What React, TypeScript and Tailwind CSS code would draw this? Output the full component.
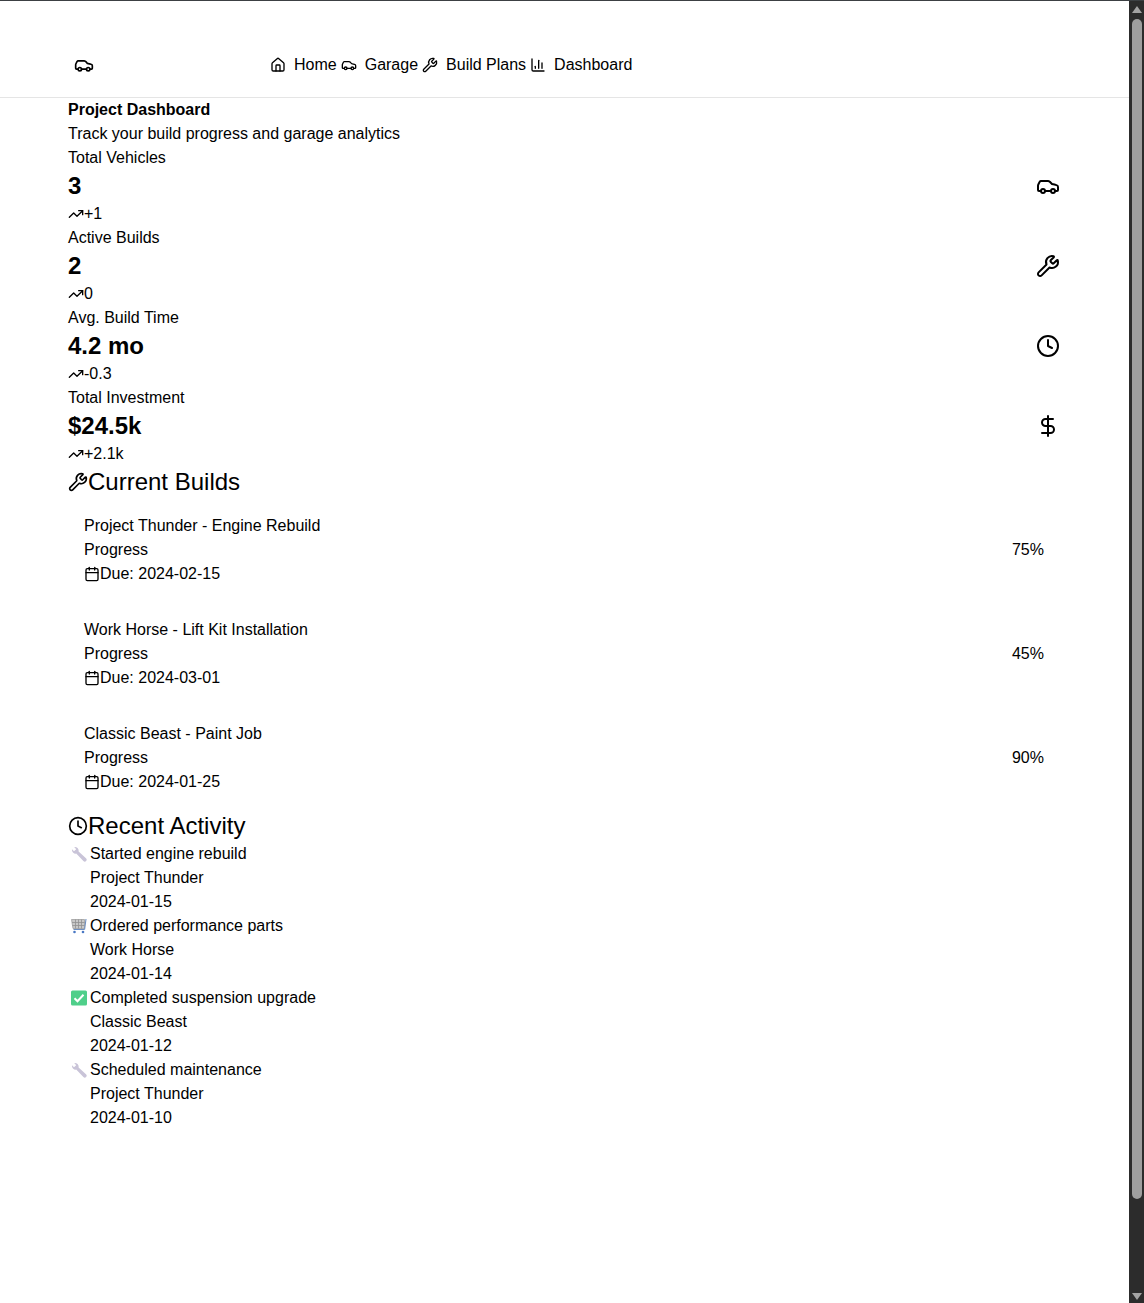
import React from 'react';
import { Home, Car, Wrench, ChartColumn, TrendingUp, Clock, DollarSign, Calendar } from "lucide-react";

const stats = [
  { label: 'Total Vehicles', value: '3', change: '+1', icon: Car },
  { label: 'Active Builds', value: '2', change: '0', icon: Wrench },
  { label: 'Avg. Build Time', value: '4.2 mo', change: '-0.3', icon: Clock },
  { label: 'Total Investment', value: '$24.5k', change: '+2.1k', icon: DollarSign },
];

const builds = [
  { name: 'Project Thunder - Engine Rebuild', progress: 75, due: '2024-02-15' },
  { name: 'Work Horse - Lift Kit Installation', progress: 45, due: '2024-03-01' },
  { name: 'Classic Beast - Paint Job', progress: 90, due: '2024-01-25' },
];

const activity = [
  { kind: 'wrench', action: 'Started engine rebuild', project: 'Project Thunder', date: '2024-01-15' },
  { kind: 'cart', action: 'Ordered performance parts', project: 'Work Horse', date: '2024-01-14' },
  { kind: 'check', action: 'Completed suspension upgrade', project: 'Classic Beast', date: '2024-01-12' },
  { kind: 'wrench', action: 'Scheduled maintenance', project: 'Project Thunder', date: '2024-01-10' },
];

const navLinks = [
  { label: 'Home', icon: Home },
  { label: 'Garage', icon: Car },
  { label: 'Build Plans', icon: Wrench },
  { label: 'Dashboard', icon: ChartColumn },
];

function ActivityGlyph({ kind }: { kind: string }) {
  if (kind === 'check') {
    return (
      <svg viewBox="0 0 16 16" className="w-4 h-4">
        <rect x="0" y="0.5" width="16" height="15" rx="1.5" fill="#4fcf8a" />
        <path d="M3.5 8.2l3 3 6-6.4" fill="none" stroke="#ffffff" strokeWidth="2" />
      </svg>
    );
  }
  if (kind === 'cart') {
    return (
      <svg viewBox="0 0 16 16" className="w-4 h-4">
        <path d="M0.5 1.5h13v9H2z" fill="#c8c8c8" stroke="#a0a0a0" strokeWidth="0.8" />
        <path d="M1 4.5h12.5M1.5 7.5h12M4.5 1.5v9M7.5 1.5v9M10.5 1.5v9" stroke="#909090" strokeWidth="0.8" />
        <path d="M13.5 11.5H2.5M13.6 11.5L15 1" fill="none" stroke="#6f8fc0" strokeWidth="1.1" />
        <circle cx="3.5" cy="14" r="1.3" fill="#4a78c4" />
        <circle cx="12" cy="14" r="1.3" fill="#4a78c4" />
      </svg>
    );
  }
  return (
    <svg viewBox="0 0 16 16" className="w-4 h-4">
      <path d="M1 3.2L3 5.2 5.2 3.2 3.2 1A3.8 3.8 0 0 1 7.6 5.4L15 12.2A1.9 1.9 0 0 1 12.4 15L5.2 7.6A3.8 3.8 0 0 1 1 3.2z" fill="#c9c4d8" />
    </svg>
  );
}

function FakeScrollbar() {
  return (
    <aside className="w-[15px] shrink-0 bg-[#2c2c2c] flex flex-col items-center">
      <svg viewBox="0 0 10 7" className="w-[10px] h-[7px] mt-[5px] shrink-0">
        <path d="M5 0l5 7H0z" fill="#a3a3a3" />
      </svg>
      <div className="w-[10px] h-[1180px] mt-[6px] rounded-t-[5px] rounded-b-[5px] bg-[#9f9f9f]" />
      <svg viewBox="0 0 10 7" className="w-[10px] h-[7px] mt-auto mb-[3px] shrink-0">
        <path d="M0 0h10L5 7z" fill="#a3a3a3" />
      </svg>
    </aside>
  );
}

export default function App() {
  return (
    <div className="flex h-[1303px] overflow-hidden border-t border-[#3c4043] bg-white text-black font-['Liberation_Sans',Arial,sans-serif] text-base">
      <div className="flex-1 min-w-0">
        <header className="h-[97px] border-b border-[#e5e5e5]">
          <div className="w-[1024px] ml-[52px] px-4 pt-[52px] flex">
            <div className="w-[202px] pl-[6px] pt-[2px] shrink-0">
              <Car className="w-5 h-5" />
            </div>
            <nav className="flex gap-1">
              {navLinks.map((link) => (
                <a key={link.label} className="flex items-center gap-2 h-6">
                  <link.icon className="w-4 h-4" />
                  {link.label}
                </a>
              ))}
            </nav>
          </div>
        </header>

        <main className="w-[1024px] ml-[52px] px-4">
          <h1 className="font-bold">Project Dashboard</h1>
          <p>Track your build progress and garage analytics</p>

          {stats.map((stat) => (
            <div key={stat.label} className="flex items-center justify-between">
              <div>
                <p>{stat.label}</p>
                <p className="text-2xl font-bold">{stat.value}</p>
                <div className="flex items-center">
                  <TrendingUp className="w-4 h-4" />
                  <span>{stat.change}</span>
                </div>
              </div>
              <stat.icon className="w-6 h-6" />
            </div>
          ))}

          <h2 className="text-2xl flex items-center">
            <Wrench className="w-5 h-5" />
            Current Builds
          </h2>
          {builds.map((build) => (
            <div key={build.name} className="p-4">
              <p>{build.name}</p>
              <div className="flex justify-between">
                <span>Progress</span>
                <span>{build.progress}%</span>
              </div>
              <div className="flex items-center">
                <Calendar className="w-4 h-4" />
                <span>Due: {build.due}</span>
              </div>
            </div>
          ))}

          <h2 className="text-2xl flex items-center">
            <Clock className="w-5 h-5" />
            Recent Activity
          </h2>
          {activity.map((item) => (
            <div key={item.action} className="flex">
              <div className="w-[22px] h-6 pl-[3px] flex items-center shrink-0">
                <ActivityGlyph kind={item.kind} />
              </div>
              <div>
                <p>{item.action}</p>
                <p>{item.project}</p>
                <p>{item.date}</p>
              </div>
            </div>
          ))}
        </main>
      </div>
      <FakeScrollbar />
    </div>
  );
}
